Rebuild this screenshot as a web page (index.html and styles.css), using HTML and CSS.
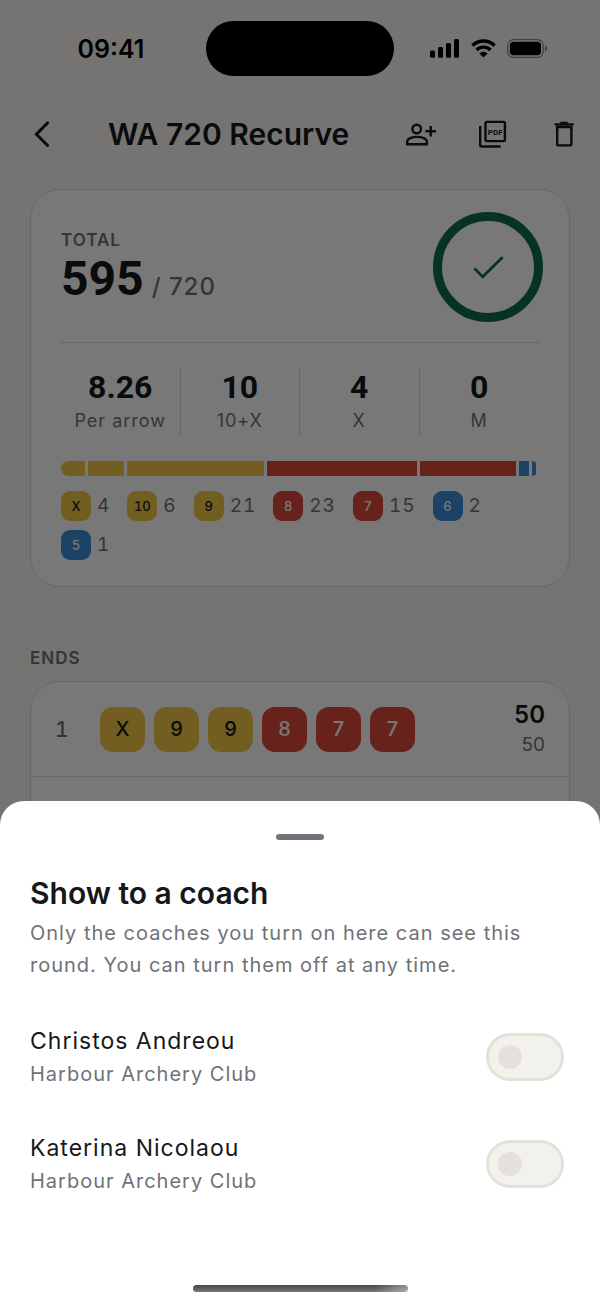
FILE: index.html
```
<!DOCTYPE html>
<html lang="en">
<head>
    <meta charset="UTF-8">
    <meta name="viewport" content="width=device-width, initial-scale=1.0">
    <title>WA 720 Recurve</title>
    <link rel="stylesheet" href="styles.css">
</head>
<body>
    <div class="screen">
        <div class="status-bar">
            <span class="time">09:41</span>
            <span class="island"></span>
            <div class="status-icons">
                <svg width="30" height="19" viewBox="0 0 30 19">
                    <rect x="0" y="11.5" width="5" height="7.2" rx="1.5" />
                    <rect x="8" y="8" width="5" height="10.7" rx="1.5" />
                    <rect x="16" y="4" width="5" height="14.7" rx="1.5" />
                    <rect x="24" y="0" width="5" height="18.7" rx="1.5" />
                </svg>
                <svg width="25" height="19" viewBox="0 0 25 19">
                    <g fill="none" stroke="currentColor" stroke-width="3.4">
                        <path d="M1.4 6.6a15.8 15.8 0 0 1 22.2 0" />
                        <path d="M5.6 11a9.8 9.8 0 0 1 13.8 0" />
                    </g>
                    <path d="M12.5 18.6 8.4 14.5a5.9 5.9 0 0 1 8.2 0z" />
                </svg>
                <svg width="41" height="19" viewBox="0 0 41 19">
                    <rect x=".6" y=".6" width="35.6" height="17.8" rx="6" fill="none" stroke="currentColor" stroke-width="1.2" opacity=".45" />
                    <rect x="2.8" y="2.8" width="31.2" height="13.4" rx="4" />
                    <path d="M38 6.5c2.6 1 2.6 5 0 6z" opacity=".5" />
                </svg>
            </div>
        </div>

        <header class="header">
            <button class="icon-button back" type="button" aria-label="Back">
                <svg class="icon" viewBox="0 0 32 32"><path d="M21.6 4.9 10.4 16.2l11.2 11.3" stroke-width="3" stroke-linecap="round" /></svg>
            </button>
            <h1 class="header-title">WA 720 Recurve</h1>
            <button class="icon-button" type="button" aria-label="Show to a coach">
                <svg class="icon" viewBox="0 0 32 32">
                    <circle cx="12.7" cy="11" r="4.3" />
                    <path d="M3.2 26.2v-2.6c0-3 5-4.7 9.8-4.7s9.8 1.7 9.8 4.7v2.6zM26.7 8v10.6M21.4 13.3H32" />
                </svg>
            </button>
            <button class="icon-button" type="button" aria-label="Export PDF">
                <svg class="icon" viewBox="0 0 32 32">
                    <rect x="9.5" y="3.9" width="19.4" height="19.2" rx="1.5" />
                    <path d="M4.2 8v19q0 1.5 1.5 1.5h19" />
                    <text class="icon-text" x="19.2" y="17" text-anchor="middle">PDF</text>
                </svg>
            </button>
            <button class="icon-button" type="button" aria-label="Delete">
                <svg class="icon" viewBox="0 0 32 32">
                    <path d="M6.6 6.4h19.2M12.4 5h7.4M9.2 9h14.2v17q0 1.4-1.4 1.4H10.6q-1.4 0-1.4-1.4z" />
                </svg>
            </button>
        </header>

        <main class="content">
            <section class="card summary">
                <div class="total-row">
                    <div>
                        <h2 class="overline">TOTAL</h2>
                        <p class="total"><strong class="total-score">595</strong> <span class="total-max">/ 720</span></p>
                    </div>
                    <svg class="ring" viewBox="0 0 102 102">
                        <circle cx="51" cy="51" r="50.5" stroke-width="9" />
                        <path d="m38.3 53.2 7.4 7.5L64.8 42" stroke-width="2.8" stroke-linecap="round" />
                    </svg>
                </div>

                <dl class="stats">
                    <div class="stat"><dd class="stat-value">8.26</dd><dt class="stat-label">Per arrow</dt></div>
                    <div class="stat"><dd class="stat-value">10</dd><dt class="stat-label">10+X</dt></div>
                    <div class="stat"><dd class="stat-value">4</dd><dt class="stat-label">X</dt></div>
                    <div class="stat"><dd class="stat-value">0</dd><dt class="stat-label">M</dt></div>
                </dl>

                <div class="bar">
                    <span class="segment gold"></span>
                    <span class="segment gold"></span>
                    <span class="segment gold"></span>
                    <span class="segment red"></span>
                    <span class="segment red"></span>
                    <span class="segment blue"></span>
                    <span class="segment blue"></span>
                </div>

                <ul class="legend">
                    <li class="legend-item"><span class="chip gold">X</span>4</li>
                    <li class="legend-item"><span class="chip gold">10</span>6</li>
                    <li class="legend-item"><span class="chip gold">9</span>21</li>
                    <li class="legend-item"><span class="chip red">8</span>23</li>
                    <li class="legend-item"><span class="chip red">7</span>15</li>
                    <li class="legend-item"><span class="chip blue">6</span>2</li>
                    <li class="legend-item"><span class="chip blue">5</span>1</li>
                </ul>
            </section>

            <h2 class="overline ends-title">ENDS</h2>
            <section class="card ends">
                <div class="end">
                    <span class="end-number">1</span>
                    <div class="arrows">
                        <span class="chip arrow gold">X</span>
                        <span class="chip arrow gold">9</span>
                        <span class="chip arrow gold">9</span>
                        <span class="chip arrow red">8</span>
                        <span class="chip arrow red">7</span>
                        <span class="chip arrow red">7</span>
                    </div>
                    <div class="end-score">
                        <strong class="end-sum">50</strong>
                        <span class="end-running">50</span>
                    </div>
                </div>
            </section>
        </main>
    </div>

    <div class="scrim"></div>

    <section class="sheet" role="dialog" aria-labelledby="sheet-title">
        <div class="handle"></div>
        <h2 class="sheet-title" id="sheet-title">Show to a coach</h2>
        <p class="sheet-text">Only the coaches you turn on here can see this round. You can turn them off at any time.</p>

        <div class="coaches">
            <div class="coach">
                <label class="coach-label" for="coach-1">
                    <span class="coach-name">Christos Andreou</span>
                    <span class="coach-club">Harbour Archery Club</span>
                </label>
                <input class="switch" type="checkbox" role="switch" id="coach-1">
            </div>
            <div class="coach">
                <label class="coach-label" for="coach-2">
                    <span class="coach-name">Katerina Nicolaou</span>
                    <span class="coach-club">Harbour Archery Club</span>
                </label>
                <input class="switch" type="checkbox" role="switch" id="coach-2">
            </div>
        </div>
        <div class="home-indicator"></div>
    </section>
</body>
</html>
```
FILE: styles.css
```
:root {
    --ink: #15181b;
    --muted: #6f7278;
    --line: #dddcd5;
    --gold: #f0c845;
    --red: #dc483c;
    --blue: #3c8cd8;
    --green: #0d6f44;
}

* {
    margin: 0;
    padding: 0;
    box-sizing: border-box;
}

body {
    font-family: Inter, "Liberation Sans", sans-serif;
    color: var(--ink);
    background: #f8f7f3;
    overflow: hidden;
}

.screen {
    height: 100vh;
    display: flex;
    flex-direction: column;
    overflow: hidden;
}

/* Status bar */
.status-bar {
    display: grid;
    grid-template-columns: 1fr 188px 1fr;
    align-items: center;
    padding: 21px 16px;
    color: #000;
}

.time {
    font-size: 25px;
    font-weight: 600;
    line-height: 30px;
    text-align: center;
}

.island {
    height: 55px;
    border-radius: 28px;
    background: #000;
}

.status-icons {
    display: flex;
    justify-content: center;
    gap: 11px;
}

/* Header */
.header {
    display: flex;
    align-items: center;
    height: 74px;
}

.icon-button {
    display: flex;
    align-items: center;
    justify-content: center;
    width: 72px;
    height: 72px;
    border: none;
    background: none;
    color: var(--ink);
    cursor: pointer;
}

.back {
    width: 84px;
}

.icon {
    width: 32px;
    height: 32px;
    fill: none;
    stroke: currentColor;
    stroke-width: 2.4;
}

.icon-text {
    font: bold 8px Roboto, sans-serif;
    fill: currentColor;
    stroke: none;
}

.header-title {
    flex: 1;
    padding-left: 24px;
    font-size: 30px;
    font-weight: 600;
    line-height: 48px;
    white-space: nowrap;
}

/* Content */
.content {
    flex: 1;
    display: flex;
    flex-direction: column;
    padding: 18px 30px 0;
}

.card {
    background: #fff;
    border: 1px solid var(--line);
    border-radius: 30px;
}

.summary {
    padding: 26px 30px;
}

.overline {
    color: var(--muted);
    font-size: 17px;
    font-weight: 600;
    line-height: 24px;
    letter-spacing: 1px;
}

.total-row {
    display: flex;
    align-items: center;
    justify-content: space-between;
    padding-bottom: 24px;
    border-bottom: 1px solid var(--line);
}

.total {
    display: flex;
    align-items: baseline;
    gap: 8px;
    white-space: nowrap;
}

.total-score {
    font-family: Roboto, sans-serif;
    font-size: 48px;
    font-weight: 700;
    line-height: 54px;
}

.total-max {
    color: var(--muted);
    font-size: 24px;
    font-weight: 500;
    line-height: 28px;
    letter-spacing: 1px;
}

.ring {
    width: 102px;
    height: 102px;
    overflow: visible;
    fill: none;
    stroke: var(--green);
}

.stats {
    display: grid;
    grid-template-columns: repeat(4, 1fr);
    margin: 24px 0 26px;
    text-align: center;
}

.stat {
    display: flex;
    flex-direction: column;
    border-right: 1px solid var(--line);
}

.stat:last-child {
    border-right: none;
}

.stat-value {
    font-family: Roboto, sans-serif;
    font-size: 32px;
    font-weight: 700;
    line-height: 40px;
}

.stat-label {
    color: var(--muted);
    font-size: 18px;
    line-height: 28px;
    letter-spacing: 1px;
}

/* one column per arrow value, sized by how often it was shot */
.bar {
    display: grid;
    grid-template-columns: 4fr 6fr 21fr 23fr 15fr 2fr 1fr;
    height: 15px;
    border-radius: 8px;
    overflow: hidden;
}

.segment {
    padding-right: 3px;
    background-clip: content-box;
}

.gold {
    background-color: var(--gold);
    color: var(--ink);
}

.red {
    background-color: var(--red);
    color: #fff;
}

.blue {
    background-color: var(--blue);
    color: #fff;
}

.legend {
    display: flex;
    flex-wrap: wrap;
    gap: 9px 17px;
    margin-top: 15px;
    list-style: none;
}

.legend-item {
    display: flex;
    align-items: center;
    gap: 6px;
    color: var(--muted);
    font-size: 19px;
    line-height: 28px;
    letter-spacing: 1px;
    font-variant-numeric: tabular-nums;
}

.chip {
    display: flex;
    align-items: center;
    justify-content: center;
    width: 30px;
    height: 30px;
    border-radius: 9px;
    font-size: 13px;
    font-weight: 500;
    letter-spacing: 0;
}

.ends-title {
    margin: 59px 0 11px;
}

.ends {
    flex: 1;
}

.end {
    display: flex;
    align-items: center;
    height: 95px;
    padding: 0 24px;
    border-bottom: 1px solid var(--line);
}

.end-number {
    width: 45px;
    color: var(--muted);
    font-size: 21px;
    font-weight: 500;
    font-variant-numeric: tabular-nums;
}

.arrows {
    flex: 1;
    display: flex;
    gap: 9px;
}

.arrow {
    width: 45px;
    height: 45px;
    border-radius: 13px;
    font-size: 20px;
}

.end-score {
    display: flex;
    flex-direction: column;
    text-align: right;
}

.end-sum {
    font-size: 24px;
    font-weight: 600;
    line-height: 32px;
}

.end-running {
    color: var(--muted);
    font-size: 19px;
    line-height: 28px;
}

/* Bottom sheet */
.scrim {
    position: fixed;
    inset: 0;
    background: rgba(0, 0, 0, 0.53);
}

.sheet {
    position: fixed;
    left: 0;
    right: 0;
    bottom: 0;
    padding: 33px 30px 12px;
    background: #fff;
    border-radius: 24px 24px 0 0;
}

.handle {
    width: 48px;
    height: 6px;
    margin: 0 auto 29px;
    border-radius: 3px;
    background: var(--muted);
}

.sheet-title {
    font-size: 30px;
    font-weight: 600;
    line-height: 48px;
}

.sheet-text {
    padding-right: 24px;
    color: var(--muted);
    font-size: 20px;
    line-height: 32px;
    letter-spacing: 1px;
}

.coaches {
    display: flex;
    flex-direction: column;
    gap: 41px;
    margin: 43px 0 88px;
}

.coach {
    display: flex;
    align-items: center;
    justify-content: space-between;
    padding-right: 6px;
}

.coach-label {
    display: flex;
    flex-direction: column;
    letter-spacing: 1px;
}

.coach-name {
    font-size: 23px;
    line-height: 34px;
}

.coach-club {
    color: var(--muted);
    font-size: 20px;
    line-height: 32px;
}

.switch {
    appearance: none;
    display: flex;
    align-items: center;
    width: 78px;
    height: 48px;
    padding: 0 9px;
    border: 3px solid #e3e1da;
    border-radius: 24px;
    background: #f2f1eb;
    cursor: pointer;
}

.switch::before {
    content: '';
    width: 24px;
    height: 24px;
    border-radius: 50%;
    background: #e3e1da;
}

.switch:checked {
    justify-content: flex-end;
    border-color: var(--green);
    background: var(--green);
}

.home-indicator {
    width: 215px;
    height: 7px;
    margin: 0 auto;
    border-radius: 4px;
    background:
        linear-gradient(90deg, transparent 85%, rgba(255, 255, 255, 0.4)),
        linear-gradient(#484848, #777);
}
```
